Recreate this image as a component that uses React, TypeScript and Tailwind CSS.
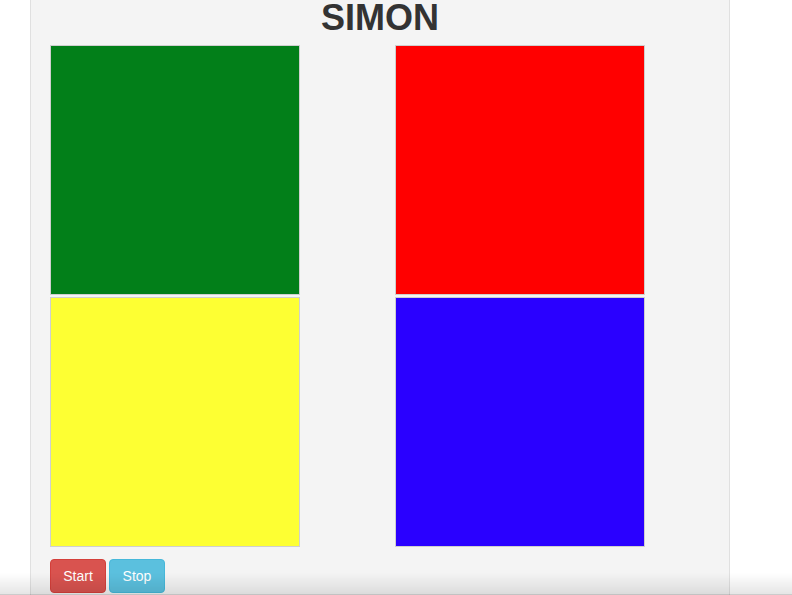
export default function App() {
  const squares = [
    { name: "green", color: "bg-[#027f19]" },
    { name: "red", color: "bg-[#ff0000]" },
    { name: "yellow", color: "bg-[#fdff33]" },
    { name: "blue", color: "bg-[#2a00ff]" },
  ];

  return (
    <div
      className="relative h-[595px] overflow-hidden bg-white"
      style={{ fontFamily: '"Liberation Sans", Arial, sans-serif' }}
    >
      {/* Game panel */}
      <div className="ml-[30px] w-[700px] h-[640px] bg-[#f4f4f4] border-x border-[#e0e0e0] px-[19px]">
        <h1 className="text-center text-[36px] leading-[35px] font-bold text-[#333] mb-[10px]">
          SIMON
        </h1>

        <div className="grid grid-cols-[250px_250px] gap-x-[95px] gap-y-[2px]">
          {squares.map((sq) => (
            <div
              key={sq.name}
              className={`h-[250px] border border-[#cfcfcf] ${sq.color}`}
            />
          ))}
        </div>

        {/* Controls */}
        <div className="mt-[12px] flex gap-[3px]">
          <button className="h-[34px] w-[56px] rounded-[4px] border border-[#d43f3a] bg-[#d9534f] text-white text-[14px]">
            Start
          </button>
          <button className="h-[34px] w-[56px] rounded-[4px] border border-[#46b8da] bg-[#5bc0de] text-white text-[14px]">
            Stop
          </button>
        </div>
      </div>

      {/* window bottom shade */}
      <div className="pointer-events-none absolute bottom-0 left-0 right-0 h-[22px] bg-gradient-to-b from-transparent to-black/10 border-b border-black/20" />
    </div>
  );
}
